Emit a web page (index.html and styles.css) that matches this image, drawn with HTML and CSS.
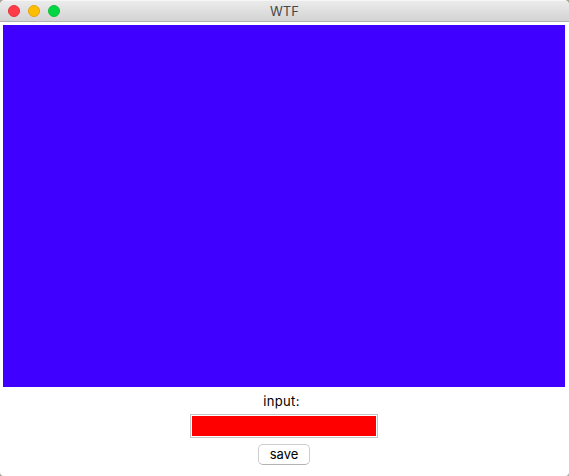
FILE: index.html
```html
<!DOCTYPE html>
<html lang="en">
<head>
<meta charset="utf-8">
<title>WTF</title>
<link rel="stylesheet" href="styles.css">
</head>
<body>
<div class="window">
  <header class="titlebar">
    <div class="controls">
      <span class="light close"></span>
      <span class="light minimize"></span>
      <span class="light expand"></span>
    </div>
    <h1 class="title">WTF</h1>
  </header>
  <main class="content">
    <div class="canvas"></div>
    <label class="label" for="entry">input:</label>
    <input class="entry" id="entry" type="text">
    <button class="save" type="button">save</button>
  </main>
</div>
</body>
</html>
```
FILE: styles.css
```css
* {
  box-sizing: border-box;
}

body {
  margin: 0;
  background: #a9a596;
  font-family: Inter, "Liberation Sans", sans-serif;
  font-size: 13px;
  color: #000;
}

.window {
  height: 476px;
  border-radius: 5px 5px 4px 4px;
  background: #fff;
  overflow: hidden;
}

.titlebar {
  display: grid;
  grid-template-columns: 1fr auto 1fr;
  align-items: center;
  height: 22px;
  border-top: 1px solid #f6f6f6;
  border-bottom: 1px solid #b3b0b3;
  background: linear-gradient(#ebebeb, #d3d3d3);
}

.controls {
  display: flex;
  gap: 8px;
  padding-left: 8px;
}

.light {
  width: 12px;
  height: 12px;
  border: 1px solid;
  border-radius: 50%;
}

.close {
  background: #ff3b47;
  border-color: #e5333e;
}

.minimize {
  background: #ffbd00;
  border-color: #e2a510;
}

.expand {
  background: #00d742;
  border-color: #13bd3c;
}

.title {
  margin: 0;
  font-size: 13px;
  font-weight: 400;
  line-height: 20px;
  color: #464646;
}

.content {
  display: flex;
  flex-direction: column;
  align-items: center;
  padding: 3px 4px 0 3px;
}

.canvas {
  align-self: stretch;
  height: 362px;
  background: #3f00ff;
}

.label {
  height: 27px;
  padding: 6px 5px 0 0;
  line-height: 17px;
  letter-spacing: 0.35px;
}

.entry {
  width: 188px;
  height: 24px;
  padding: 0;
  border: 1px solid #c4c4c4;
  outline: 1px solid #fff;
  outline-offset: -2px;
  background: #f00;
}

.save {
  width: 52px;
  height: 21px;
  margin-top: 6px;
  padding: 0 0 1px;
  border: 1px solid #cdcdcd;
  border-bottom-color: #b3b3b3;
  border-radius: 5px;
  background: #fff;
  font: inherit;
  line-height: 17px;
  color: #000;
}
```
